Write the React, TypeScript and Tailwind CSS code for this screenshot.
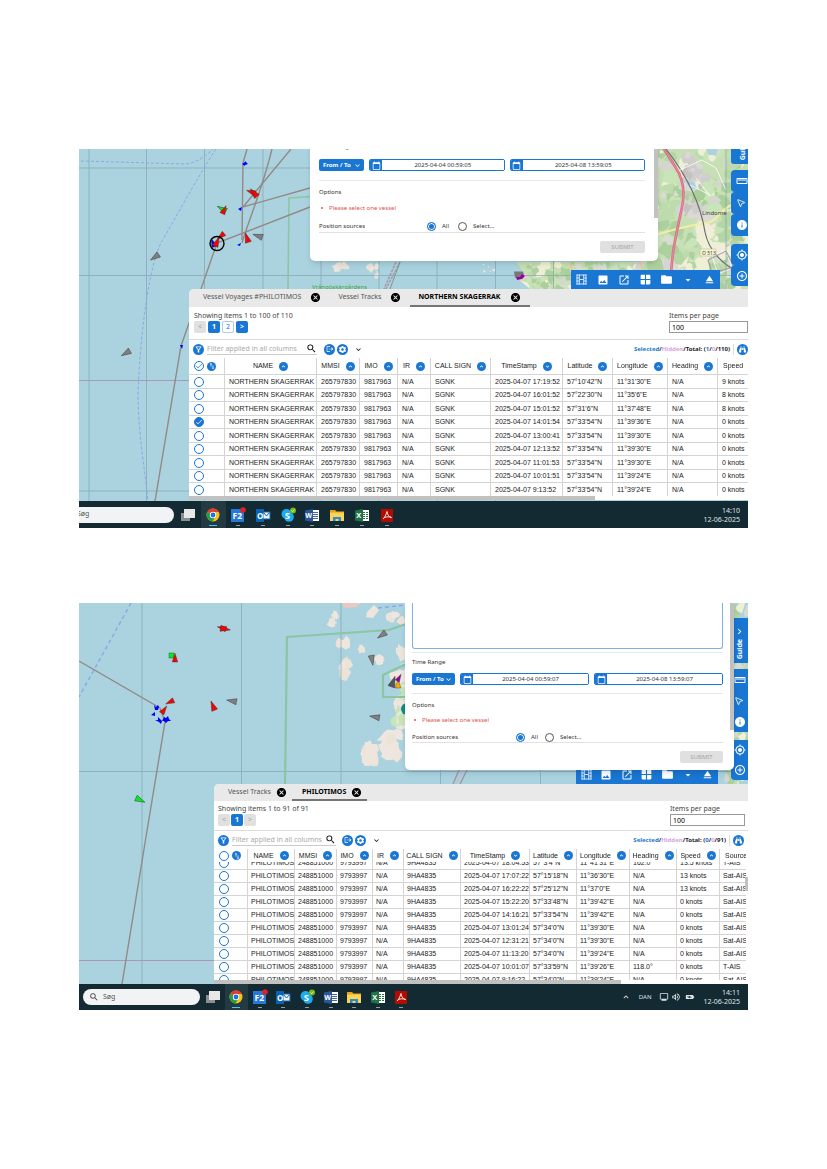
import { useLayoutEffect, useRef } from "react";
import { clsx } from "clsx";
import {
  MdAddCircleOutline,
  MdArrowDropDown,
  MdBatteryChargingFull,
  MdCalendarToday,
  MdCancel,
  MdCheck,
  MdChevronRight,
  MdEject,
  MdExpandLess,
  MdExpandMore,
  MdFolder,
  MdInfo,
  MdLogout,
  MdMyLocation,
  MdOpenInNew,
  MdOutlineFilterAlt,
  MdOutlineMonitor,
  MdOutlineVolumeUp,
  MdPhoto,
  MdSearch,
  MdSettings,
  MdStraighten,
  MdSwapVert,
  MdWindow,
} from "react-icons/md";
import { FaBinoculars } from "react-icons/fa";
import { LuMousePointer2 } from "react-icons/lu";

type Column = { label: string; width: string; down?: boolean; noSort?: boolean };

const voyageColumns: Column[] = [
  { label: "NAME", width: "w-[92px]" },
  { label: "MMSI", width: "w-[43px]" },
  { label: "IMO", width: "w-[38px]" },
  { label: "IR", width: "w-[33px]" },
  { label: "CALL SIGN", width: "w-[60px]" },
  { label: "TimeStamp", width: "w-[72px]", down: true },
  { label: "Latitude", width: "w-[50px]" },
  { label: "Longitude", width: "w-[55px]" },
  { label: "Heading", width: "w-[50px]" },
  { label: "Speed", width: "w-auto", noSort: true },
];

const voyageRows = [
  ["17:19:52", "57°10'42\"N", "11°31'30\"E", "9 knots"],
  ["16:01:52", "57°22'30\"N", "11°35'6\"E", "8 knots"],
  ["15:01:52", "57°31'6\"N", "11°37'48\"E", "8 knots"],
  ["14:01:54", "57°33'54\"N", "11°39'36\"E", "0 knots"],
  ["13:00:41", "57°33'54\"N", "11°39'30\"E", "0 knots"],
  ["12:13:52", "57°33'54\"N", "11°39'30\"E", "0 knots"],
  ["11:01:53", "57°33'54\"N", "11°39'30\"E", "0 knots"],
  ["10:01:51", "57°33'54\"N", "11°39'24\"E", "0 knots"],
  ["9:13:52", "57°33'54\"N", "11°39'24\"E", "0 knots"],
].map(([time, lat, lon, speed]) => [
  "NORTHERN SKAGERRAK", "265797830", "9817963", "N/A", "SGNK", `2025-04-07 ${time}`, lat, lon, "N/A", speed,
]);

const trackColumns: Column[] = [
  { label: "NAME", width: "w-[47px]" },
  { label: "MMSI", width: "w-[42px]" },
  { label: "IMO", width: "w-[36px]" },
  { label: "IR", width: "w-[31px]" },
  { label: "CALL SIGN", width: "w-[57px]" },
  { label: "TimeStamp", width: "w-[69px]", down: true },
  { label: "Latitude", width: "w-[47px]" },
  { label: "Longitude", width: "w-[53px]" },
  { label: "Heading", width: "w-[47px]" },
  { label: "Speed", width: "w-[43px]" },
  { label: "Source", width: "w-auto", noSort: true },
];

const trackRows = [
  ["18:04:53", "57°3'4\"N", "11°41'31\"E", "162.0°", "13.5 knots", "T-AIS"],
  ["17:07:22", "57°15'18\"N", "11°36'30\"E", "N/A", "13 knots", "Sat-AIS"],
  ["16:22:22", "57°25'12\"N", "11°37'0\"E", "N/A", "13 knots", "Sat-AIS"],
  ["15:22:20", "57°33'48\"N", "11°39'42\"E", "N/A", "0 knots", "Sat-AIS"],
  ["14:16:21", "57°33'54\"N", "11°39'42\"E", "N/A", "0 knots", "Sat-AIS"],
  ["13:01:24", "57°34'0\"N", "11°39'30\"E", "N/A", "0 knots", "Sat-AIS"],
  ["12:31:21", "57°34'0\"N", "11°39'30\"E", "N/A", "0 knots", "Sat-AIS"],
  ["11:13:20", "57°34'0\"N", "11°39'24\"E", "N/A", "0 knots", "Sat-AIS"],
  ["10:01:07", "57°33'59\"N", "11°39'26\"E", "118.0°", "0 knots", "T-AIS"],
  ["9:16:22", "57°34'0\"N", "11°39'24\"E", "N/A", "0 knots", "Sat-AIS"],
].map(([time, ...rest]) => [
  "PHILOTIMOS", "248851000", "9793997", "N/A", "9HA4835", `2025-04-07 ${time}`, ...rest,
]);

/* ---------- map ---------- */

function Vessel({ x, y, a, color, s = 1 }: { x: number; y: number; a: number; color: string; s?: number }) {
  return (
    <path
      d="M0 -6 L3.4 5 L-3.4 5 Z"
      fill={color}
      stroke="#333"
      strokeWidth="0.5"
      transform={`translate(${x} ${y}) rotate(${a}) scale(${s})`}
    />
  );
}

// irregular patches spread over a box, always the same for the same seed
function Patches({ x, y, w, h, n, r, seed, colors }: {
  x: number; y: number; w: number; h: number; n: number; r: number; seed: number; colors: string[];
}) {
  let state = seed * 7919;
  const rnd = () => {
    state = (state * 16807) % 2147483647;
    return state / 2147483647;
  };
  return (
    <g>
      {Array.from({ length: n }, (_, i) => {
        const cx = x + rnd() * w;
        const cy = y + rnd() * h;
        const size = r * (0.3 + rnd());
        const points = Array.from({ length: 9 }, (_, k) => {
          const t = (k / 9) * Math.PI * 2;
          const d = size * (0.5 + rnd() * 0.7);
          return `${(cx + Math.cos(t) * d).toFixed(1)},${(cy + Math.sin(t) * d).toFixed(1)}`;
        });
        return <polygon key={i} points={points.join(" ")} fill={colors[Math.floor(rnd() * colors.length)]} />;
      })}
    </g>
  );
}

const landColors = ["#add19e", "#bcdcae", "#a9cf9a", "#eef0d5", "#d6d5d3", "#c8e4b8", "#dadbd2", "#b4d6a5"];
const rockColors = ["#eee5dc", "#efe6df", "#ebe2d8"];

function SkagerrakMap() {
  return (
    <svg className="absolute inset-0 h-full w-full" viewBox="79 149 669 352" preserveAspectRatio="xMinYMin slice" aria-hidden="true">
      <defs>
        <clipPath id="eastLand">
          <path d="M516 262 L522 270 L517 278 L530 289 L748 289 L748 149 L640 149 L640 262 Z" />
        </clipPath>
      </defs>
      <rect x="79" y="149" width="669" height="352" fill="#aad3df" />
      <Patches x={334} y={262} w={16} h={6} n={7} r={4} seed={12} colors={rockColors} />
      <Patches x={370} y={266} w={9} h={10} n={8} r={4} seed={77} colors={rockColors} />
      <Patches x={478} y={262} w={18} h={10} n={5} r={2} seed={5} colors={rockColors} />
      <g clipPath="url(#eastLand)">
        <rect x="510" y="149" width="240" height="141" fill="#c7dfb4" />
        <Patches x={516} y={260} w={220} h={30} n={260} r={5} seed={31} colors={landColors} />
        <Patches x={655} y={149} w={95} h={120} n={170} r={7} seed={91} colors={landColors} />
        <Patches x={684} y={154} w={22} h={60} n={26} r={7} seed={8} colors={["#d0cdcd", "#dcd8d8", "#c5c1c1"]} />
        <Patches x={702} y={222} w={20} h={34} n={14} r={8} seed={44} colors={["#eef0d5", "#f0edd8"]} />
        <path d="M706 149 h12 l-2 6 h-7z M684 180 l10 2 4 8 -8 -2z" fill="#aad3df" />
        <g fill="none">
          <path d="M658 234 C680 228 690 225 703 224 S718 212 731 205" stroke="#f3efa2" strokeWidth="2" />
          <path d="M664 149 L676 168 C684 180 685 196 681 212 C676 236 670 258 671 289" stroke="#dc6a85" strokeWidth="2.6" />
          <path d="M664 149 L676 168 C684 180 685 196 681 212 C676 236 670 258 671 289" stroke="#e88ba2" strokeWidth="1" />
          <path d="M666 149 C684 172 700 200 705 232 C709 252 722 262 731 268" stroke="#6d6d6d" strokeWidth="1.2" />
          <path d="M680 170 l22 -10 14 8 10 22 M690 185 l20 10 M696 178 l14 18 M712 256 l14 -6 6 18 -14 6z" stroke="#fff" strokeWidth="0.8" />
          <path d="M708 260 l18 -9 8 16 -22 6z" stroke="#a98fae" strokeWidth="1" />
        </g>
        <path d="M571 262 l1 26 M640 262 l8 26" stroke="#f7c48a" strokeWidth="1.2" />
      </g>
      <path d="M400 262 L386 289 M396 262 L384 289" stroke="#a79ab5" strokeWidth="1.6" fill="none" strokeDasharray="3 1" />
      <path d="M400 262 L390 289" stroke="#7c9a86" strokeWidth="1" fill="none" />

      <g stroke="#7d9ca7" strokeWidth="1" opacity="0.6">
        <path d="M89 149V501M146.5 149V501M204.5 149V501M263 149V501M321 149V501M379 149V501M437 149V501M495.5 149V501M553.5 149V501M726 149V501" />
        <path d="M79 168H310M79 275.5H731M79 491H200" />
      </g>
      <path d="M79 380.5 H190" stroke="#a897b5" strokeWidth="1.2" />
      <g fill="none" stroke="#8da5ea" strokeWidth="1" strokeDasharray="3 2">
        <path d="M81 161 L150 163 L186 164 C196 163 206 156 213 149" />
        <path d="M216 149 C196 180 180 210 162 241 C150 262 140 330 138 396 C139 440 145 470 148 501" />
      </g>
      <path d="M312 196.5 L289 198 L288 289" fill="none" stroke="#8cc5a4" strokeWidth="1.6" />
      <g fill="none" stroke="#938986" strokeWidth="1.4">
        <path d="M247 149 L243 163 L242 240" />
        <path d="M272 149 C262 190 248 222 242 243" />
        <path d="M291 149 L243 207 L310 188" />
        <path d="M310 207 L217 243 L201 289 L181 346 L155 501" />
      </g>
      <text x="312" y="289" fontSize="6" fill="#39a53f" fontFamily="Noto Sans, sans-serif">Vrångöskärgårdens</text>
      <text x="702" y="215" fontSize="6" fill="#444" fontFamily="Noto Sans, sans-serif">Lindome</text>
      <rect x="700" y="249" width="16" height="7" rx="1" fill="#f4f3d2" stroke="#b9b58a" strokeWidth="0.5" />
      <text x="702" y="254.5" fontSize="5" fill="#444" fontFamily="Noto Sans, sans-serif">O 513</text>

      <Vessel x={251} y={192} a={-70} color="#f00" s={0.8} />
      <Vessel x={254} y={193} a={-40} color="#f00" s={0.9} />
      <Vessel x={222} y={209} a={-60} color="#0e2" s={0.9} />
      <Vessel x={224} y={210} a={25} color="#f00" s={0.8} />
      <Vessel x={213} y={243} a={-20} color="#00f" s={0.8} />
      <Vessel x={221} y={236} a={-130} color="#f00" s={0.8} />
      <Vessel x={217} y={242} a={25} color="#f00" s={0.9} />
      <Vessel x={247} y={238} a={-18} color="#f00" s={0.9} />
      <Vessel x={258} y={236} a={-72} color="#808080" s={0.9} />
      <Vessel x={155} y={257} a={-125} color="#808080" s={0.9} />
      <Vessel x={126} y={353} a={-120} color="#808080" s={0.9} />
      <path d="M514 271.5 l9 0 1 4 -3 3 -6 -1z" fill="#777" />
      <path d="M516 277 l4 0 2 -3 3 2 -3 3 -5 1z" fill="#909" />
      <g fill="#00f">
        <path d="M242 164 l3 -2 0 -1 3 3 -3 1 0 1z M238 209 l4 -2 -1 4z M237 245 l4 -2 -1 3z M180 345 l3 0 -1 4z" />
      </g>
      <circle cx="217" cy="243.5" r="7" fill="none" stroke="#000" strokeWidth="1.4" />
    </svg>
  );
}

function PhilotimosMap() {
  return (
    <svg className="absolute inset-0 h-full w-full" viewBox="79 603 669 381" preserveAspectRatio="xMinYMin slice" aria-hidden="true">
      <rect x="79" y="603" width="669" height="381" fill="#aad3df" />
      <path d="M341 603 h20 l-4 4 -12 1z" fill="#ecc8c0" />
      <path d="M367 612 l7 -7 5 5 -6 8 -7 -1z" fill="#eee5dc" />
      <Patches x={330} y={614} w={7} h={9} n={6} r={4} seed={3} colors={rockColors} />
      <Patches x={388} y={614} w={16} h={8} n={9} r={5} seed={19} colors={rockColors} />
      <Patches x={338} y={642} w={10} h={3} n={8} r={5} seed={41} colors={rockColors} />
      <Patches x={342} y={662} w={7} h={12} n={12} r={7} seed={57} colors={rockColors} />
      <Patches x={360} y={647} w={3} h={3} n={3} r={4} seed={9} colors={rockColors} />
      <Patches x={378} y={658} w={4} h={3} n={3} r={5} seed={23} colors={rockColors} />
      <Patches x={366} y={744} w={6} h={18} n={18} r={7} seed={88} colors={rockColors} />
      <Patches x={386} y={732} w={10} h={24} n={18} r={8} seed={63} colors={rockColors} />
      <Patches x={397} y={645} w={9} h={85} n={30} r={7} seed={101} colors={["#eee5dc", "#efe6df", "#c8e4b8", "#e9e4dc"]} />
      <Patches x={725} y={603} w={25} h={180} n={110} r={7} seed={71} colors={landColors} />
      <g stroke="#7d9ca7" strokeWidth="1" opacity="0.6">
        <path d="M142 603V984M241.5 603V984M341 603V784M440.5 603V784M540.5 603V784M79 771.5H734" />
      </g>
      <path d="M79 960.5 H214" stroke="#a897b5" strokeWidth="1.2" />
      <path d="M131 603 L79 697 M378 608 L405 605" fill="none" stroke="#8da5ea" strokeWidth="1.4" strokeDasharray="4 3" />
      <g fill="none" stroke="#8cc5a4" strokeWidth="2.2">
        <path d="M406 624 L389 630 L287 637 L285 784" />
        <path d="M406 664 L383 675 V697 H406" />
      </g>
      <path d="M467 770 L460 784 M459 770 L453 784" stroke="#9a9fa0" strokeWidth="1.6" fill="none" />
      <path d="M463 770 L456 784" stroke="#d7a9dd" strokeWidth="1.4" fill="none" strokeDasharray="2 1" />
      <path d="M79 661 L160 708 L165 722 L145 843 L122 984" fill="none" stroke="#938986" strokeWidth="1.4" />
      <circle cx="407" cy="709" r="6" fill="#108a8a" />

      <Vessel x={222} y={628} a={-75} color="#f00" s={0.8} />
      <Vessel x={225} y={629} a={100} color="#f00" s={0.9} />
      <rect x="169" y="653" width="5" height="5" fill="#0e2" stroke="#333" strokeWidth="0.4" />
      <Vessel x={175} y={658} a={0} color="#f00" s={0.8} />
      <Vessel x={170} y={702} a={-115} color="#f00" s={0.8} />
      <Vessel x={164} y={710} a={35} color="#f00" s={0.8} />
      <Vessel x={213} y={706} a={-22} color="#f00" s={0.9} />
      <Vessel x={232} y={701} a={-80} color="#808080" s={0.9} />
      <Vessel x={140} y={800} a={115} color="#0e2" s={0.9} />
      <Vessel x={382} y={635} a={-125} color="#808080" s={0.9} />
      <Vessel x={372} y={660} a={170} color="#808080" s={0.9} />
      <Vessel x={375} y={717} a={-80} color="#808080" s={0.9} />
      <Vessel x={393} y={682} a={20} color="#555" />
      <Vessel x={398} y={684} a={0} color="#fa0" s={0.8} />
      <Vessel x={399} y={678} a={30} color="#909" s={0.7} />
      <g fill="#00f">
        <path d="M154 705 l2 2 2 -2 1 2 -1 3 -3 0z M151 715 l4 -3 0 4z M155 720 l3 0 0 -3 4 4 -1 3 -2 -2z M164 717 l2 1 2 -2 1 3 2 2 -3 0 -2 2 -2 -2 -2 0z" />
      </g>
    </svg>
  );
}

/* ---------- search dialog ---------- */

function DateField({ label, value }: { label: string; value: string }) {
  return (
    <label className="flex h-3 min-w-0 flex-1 overflow-hidden rounded-[2px] border border-[#1976d2]">
      <span className="flex w-3 shrink-0 items-center justify-center bg-[#1976d2] text-white">
        <MdCalendarToday size={9} />
      </span>
      <input aria-label={label} defaultValue={value} className="w-full min-w-0 bg-white text-center text-[6px] leading-[10px] text-[#333] outline-none" />
    </label>
  );
}

function SearchDialog({ id, from, to, roomy, className }: {
  id: string; from: string; to: string; roomy?: boolean; className: string;
}) {
  const radio = "size-[9px] appearance-none rounded-full border border-[#555] checked:border-[#1976d2] checked:bg-[#1976d2] checked:shadow-[inset_0_0_0_1px_white]";
  return (
    <form
      onSubmit={(e) => e.preventDefault()}
      className={clsx("absolute rounded-b-[5px] bg-white text-[6px] leading-[10px] text-[#333] shadow-md", className)}
    >
      {!roomy && (
        <>
          <textarea aria-label="Vessels" className="block h-[46px] w-full resize-none rounded-b-[3px] border border-t-0 border-[#7fb1e3] outline-none" />
          <hr className="mt-[3px] mb-1 border-[#e8e8e8]" />
        </>
      )}
      <h2>Time Range</h2>
      <div className={clsx("flex gap-[5px]", roomy ? "mt-[7px]" : "mt-1.5")}>
        <div className="relative text-white">
          <select aria-label="Range type" className={clsx("block h-3 appearance-none rounded-[2px] bg-[#1976d2] pl-1 text-[6px] font-bold outline-none", roomy ? "w-[45px]" : "w-[43px]")}>
            <option>From / To</option>
          </select>
          <MdExpandMore size={9} className="pointer-events-none absolute top-0.5 right-0.5" />
        </div>
        <DateField label="From" value={from} />
        <DateField label="To" value={to} />
      </div>
      <hr className={clsx("border-[#e8e8e8]", roomy ? "mt-[9px]" : "mt-2")} />
      <h2 className="mt-1.5">Options</h2>
      <ul className={clsx("text-[#d9534f]", roomy ? "mt-1.5" : "mt-[5px]")}>
        <li className="flex items-center gap-1.5 pl-0.5">
          <span className="size-0.5 rounded-full bg-[#d9534f]" />
          Please select one vessel
        </li>
      </ul>
      <fieldset className={clsx("flex items-center border-b border-[#e2e2e2]", roomy ? "mt-2 pb-px" : "mt-[7px]")}>
        <legend className={clsx("float-left", roomy ? "w-[108px]" : "w-[104px]")}>Position sources</legend>
        <label className="flex items-center gap-1.5">
          <input type="radio" name={`${id}-source`} defaultChecked className={radio} />
          All
        </label>
        <label className={clsx("flex items-center gap-1.5", roomy ? "ml-[9px]" : "ml-[7px]")}>
          <input type="radio" name={`${id}-source`} className={radio} />
          Select...
        </label>
      </fieldset>
      <button type="submit" disabled className={clsx("mt-2 ml-auto block h-3 rounded-[2px] bg-[#e0e0e0] text-[#a6a6a6]", roomy ? "w-[45px]" : "w-[43px]")}>
        SUBMIT
      </button>
      <div className={clsx("absolute top-0 right-0 w-1 bg-[#c1c1c1]", roomy ? "h-[76px]" : "h-[127px]")} />
    </form>
  );
}

/* ---------- toolbars ---------- */

function FilmIcon() {
  return (
    <svg width="11" height="11" viewBox="0 0 11 11" fill="none" stroke="currentColor" strokeWidth="0.8" aria-hidden="true">
      <path d="M0.5 1H10.5M0.5 10H10.5M0.5 4H3M0.5 7H3M8 4H10.5M8 7H10.5M3.5 5.5H7.5M1 0.5V10.5M3.3 0.5V10.5M7.7 0.5V10.5M10 0.5V10.5" />
    </svg>
  );
}

function MapToolbar({ className }: { className: string }) {
  const tools = [
    ["Timeline", <FilmIcon />],
    ["Snapshot", <MdPhoto size={12} />],
    ["Open window", <MdOpenInNew size={12} />],
    ["Layout", <MdWindow size={13} />],
    ["Folder", <MdFolder size={13} />],
    ["More", <MdArrowDropDown size={12} />],
    ["Eject", <MdEject size={13} />],
  ] as const;
  return (
    <div className={clsx("absolute flex items-center bg-[#1976d2] text-white", className)}>
      {tools.map(([name, icon]) => (
        <button key={name} aria-label={name} className="flex flex-1 items-center justify-center">
          {icon}
        </button>
      ))}
    </div>
  );
}

function SideTool({ name, height, children }: { name: string; height: string; children: React.ReactNode }) {
  return (
    <button aria-label={name} className={clsx("flex w-full items-center rounded-l-[4px] bg-[#1976d2]", height)}>
      {children}
    </button>
  );
}

function SideTools({ narrow, className }: { narrow?: boolean; className: string }) {
  const upper = narrow ? "h-[21px] pl-[3px]" : "h-[22px] pl-[5px]";
  const lower = narrow ? "h-[20px] pl-[3px]" : "h-[21px] pl-[5px]";
  return (
    <div className={clsx("absolute right-0 flex w-[17px] flex-col text-white", className)}>
      <button className={clsx("flex h-[45px] flex-col items-center justify-end rounded-l-[3px] bg-[#1976d2] pb-1", narrow ? "pl-0" : "pl-1.5")}>
        <MdChevronRight size={11} />
        <span className="mt-0.5 rotate-180 text-[7px] leading-[8px] font-bold [writing-mode:vertical-rl]">Guide</span>
      </button>
      <div className="mt-1.5">
        <SideTool name="Measure" height={upper}><MdStraighten size={12} /></SideTool>
        <SideTool name="Pointer" height={upper}><LuMousePointer2 size={10} /></SideTool>
        <SideTool name="Information" height={upper}><MdInfo size={12} /></SideTool>
      </div>
      <div className="mt-2">
        <SideTool name="Locate" height={lower}><MdMyLocation size={12} /></SideTool>
        <SideTool name="Zoom in" height={lower}><MdAddCircleOutline size={12} /></SideTool>
      </div>
    </div>
  );
}

/* ---------- results panel ---------- */

function Tab({ label, active, dense }: { label: string; active?: boolean; dense?: boolean }) {
  return (
    <div
      className={clsx(
        "flex items-center border-b-2 pt-px",
        dense ? "gap-[5px] pr-[5px] pl-2.5" : "gap-[9px] pr-[9px] pl-2",
        active ? "border-[#757575] font-bold text-black" : "border-transparent text-[#555]",
      )}
    >
      <button>{label}</button>
      <button aria-label={`Close ${label}`} className="text-black"><MdCancel size={11} /></button>
    </div>
  );
}

function PageButton({ children, kind }: { children: React.ReactNode; kind: "off" | "on" | "plain" }) {
  return (
    <button
      disabled={kind === "off"}
      className={clsx(
        "size-3 rounded-[2px] text-center text-[7px] leading-[10px]",
        kind === "off" && "bg-[#e0e0e0] text-[#aaa]",
        kind === "on" && "bg-[#1976d2] font-bold text-white",
        kind === "plain" && "border border-[#a9cbee] bg-white text-[#1976d2]",
      )}
    >
      {children}
    </button>
  );
}

function Round({ name, children, small }: { name: string; children: React.ReactNode; small?: boolean }) {
  return (
    <button aria-label={name} className={clsx("flex shrink-0 items-center justify-center rounded-full bg-[#1976d2] text-white", small ? "size-[9px]" : "size-[11px]")}>
      {children}
    </button>
  );
}

function Tick({ label, checked, outlined }: { label: string; checked?: boolean; outlined?: boolean }) {
  return (
    <span className="inline-grid size-[10px] place-items-center align-middle">
      <input
        type="checkbox"
        aria-label={label}
        defaultChecked={checked}
        className={clsx("col-start-1 row-start-1 size-[10px] appearance-none rounded-full border border-[#1976d2]", outlined ? "bg-white" : "checked:bg-[#1976d2]")}
      />
      {checked && (
        <MdCheck size={8} className={clsx("pointer-events-none z-10 col-start-1 row-start-1", outlined ? "text-[#1976d2]" : "text-white")} />
      )}
    </span>
  );
}

function ResultsTable({ columns, rows, checkedRow, allTicked, dense, scrolled, className }: {
  columns: Column[]; rows: string[][]; checkedRow?: number; allTicked?: boolean; dense?: boolean; scrolled: number; className: string;
}) {
  const box = useRef<HTMLDivElement>(null);

  useLayoutEffect(() => {
    if (box.current) box.current.scrollTop = scrolled;
  }, [scrolled]);

  return (
    <div ref={box} className={clsx("overflow-hidden", className)}>
      <table className="w-full table-fixed border-separate border-spacing-0 font-['Liberation_Sans',Arial,sans-serif] text-[7px] leading-[8px] text-[#222]">
        <colgroup>
          <col className={dense ? "w-[34px]" : "w-[36px]"} />
          {columns.map((c) => <col key={c.label} className={c.width} />)}
        </colgroup>
        <thead className="sticky top-0 z-20 bg-white">
          <tr className={dense ? "h-[13px]" : "h-[17px]"}>
            <th className={clsx("border-r border-[#d4d4d4] p-0 pl-[5px] text-left", !dense && "border-b")}>
              <span className="flex items-center gap-[3px]">
                <Tick label="Select all" checked={allTicked} outlined />
                <Round name="Swap sorting" small><MdSwapVert size={8} /></Round>
              </span>
            </th>
            {columns.map((c) => (
              <th key={c.label} className={clsx("border-[#d4d4d4] p-0 font-normal", !dense && "border-b", c.noSort ? "pl-[5px] text-left" : "border-r")}>
                <span className={clsx("flex items-center gap-1.5", !c.noSort && "justify-center")}>
                  {c.label}
                  {!c.noSort && (
                    <Round name={`Sort by ${c.label}`} small>
                      {c.down ? <MdExpandMore size={7} /> : <MdExpandLess size={7} />}
                    </Round>
                  )}
                </span>
              </th>
            ))}
          </tr>
        </thead>
        <tbody>
          {rows.map((row, i) => (
            <tr key={row[5]} className={dense ? "h-[13px]" : "odd:h-[14px] even:h-[13px]"}>
              <td className="border-r border-b border-[#d4d4d4] p-0 pl-[5px]">
                <span className="flex items-center"><Tick label={`Select ${row[5]}`} checked={i === checkedRow} /></span>
              </td>
              {row.map((cell, k) => (
                <td key={k} className={clsx("border-b border-[#d4d4d4] p-0 whitespace-nowrap", dense ? "pl-[3px]" : "pl-1", k < row.length - 1 && "border-r")}>
                  {cell}
                </td>
              ))}
            </tr>
          ))}
        </tbody>
      </table>
    </div>
  );
}

function PanelBar({ selected, total, dense }: { selected: string; total: string; dense?: boolean }) {
  return (
    <div className={clsx("flex h-[19px] items-center border-t border-[#dcdcdc] pl-1", dense && "pr-1")}>
      <Round name="Filter"><MdOutlineFilterAlt size={9} /></Round>
      <div className={clsx("ml-[3px] flex items-center border-b border-[#ccc]", dense ? "w-[104px]" : "w-[110px]")}>
        <input
          aria-label="Filter"
          placeholder="Filter applied in all columns"
          className="h-2.5 min-w-0 flex-1 text-[7px] leading-[10px] outline-none placeholder:text-[#aaa]"
        />
        <MdSearch size={11} className="shrink-0 text-black" />
      </div>
      <div className={clsx("flex items-center gap-0.5", dense ? "ml-1.5" : "ml-[7px]")}>
        <Round name="Export"><MdLogout size={8} /></Round>
        <Round name="Settings"><MdSettings size={9} /></Round>
        <button aria-label="More" className="ml-1"><MdExpandMore size={9} className="text-black" /></button>
      </div>
      <div className="ml-auto text-[6px] font-bold text-[#222]">
        <span className="text-[#1976d2]">Selected</span>/<span className="text-[#d9a3e0]">Hidden</span>/Total: (
        <span className="text-[#1976d2]">{selected}</span>/<span className="text-[#d9a3e0]">0</span>/{total})
      </div>
      <div className="ml-[3px] border-l border-[#ddd] pl-[3px]">
        <Round name="Find"><FaBinoculars size={7} /></Round>
      </div>
    </div>
  );
}

function PageSize({ id, className }: { id: string; className: string }) {
  return (
    <div className={clsx("flex flex-col", className)}>
      <label htmlFor={id} className="leading-[10px]">Items per page</label>
      <input id={id} defaultValue="100" className="h-3 w-full border border-[#999] px-0.5 text-[7px] text-black outline-none" />
    </div>
  );
}

/* ---------- taskbar ---------- */

function AppIcon({ kind }: { kind: string }) {
  return (
    <svg width="16" height="16" viewBox="0 0 16 16" aria-hidden="true" fontFamily="Open Sans, sans-serif" fontWeight="bold">
      {kind === "tasks" && <><rect x="1" y="6" width="9" height="8" fill="#8a8f92" /><rect x="4" y="2" width="11" height="9" fill="#e8e8e8" /></>}
      {kind === "chrome" && (
        <>
          <circle cx="8" cy="8" r="6.5" fill="#fbc116" />
          <path d="M8 8 L2.400 4.700 A6.5 6.5 0 0 1 13.700 4.900 L8 4.900Z" fill="#e33b2e" />
          <path d="M8 8 L2.400 4.700 A6.5 6.5 0 0 0 7.5 14.5 L10.600 9.600Z" fill="#2a9d47" />
          <circle cx="8" cy="8" r="3.2" fill="#fff" />
          <circle cx="8" cy="8" r="2.4" fill="#1b73e8" />
        </>
      )}
      {kind === "f2" && <><rect x="1" y="2" width="13" height="13" fill="#2678d9" /><text x="2.5" y="11.5" fontSize="8.5" fill="#fff">F2</text><circle cx="13" cy="3" r="2.8" fill="#d22" /></>}
      {kind === "outlook" && <><rect x="1" y="2" width="8" height="13" fill="#0a64b5" /><rect x="8" y="5" width="7" height="7" fill="#e9f3fb" stroke="#0a64b5" /><path d="M8.5 5.5 L11.5 9 L14.5 5.5" fill="none" stroke="#0a64b5" /><text x="2" y="11.5" fontSize="8" fill="#fff">O</text></>}
      {kind === "skype" && <><circle cx="6.5" cy="7" r="5" fill="#1badec" /><circle cx="9" cy="10" r="4.8" fill="#1badec" /><text x="4.8" y="12" fontSize="9.5" fill="#fff">S</text><circle cx="13" cy="3.5" r="3" fill="#78ba12" /><path d="M11.5 3.5 l1.200 1.200 1.800 -2.200" stroke="#fff" fill="none" strokeWidth="0.7" /></>}
      {kind === "word" && <><rect x="7" y="3" width="8" height="11" fill="#fff" /><path d="M9 5.5h5M9 7.5h5M9 9.5h5M9 11.5h5" stroke="#2b579a" strokeWidth="0.9" /><path d="M1 3.5 L9 2 V15 L1 13.5Z" fill="#2b579a" /><text x="1.3" y="11" fontSize="7" fill="#fff">W</text></>}
      {kind === "folder" && <><path d="M1 3h5l1.500 1.500H15V14H1Z" fill="#e8a317" /><rect x="1" y="5.5" width="14" height="8.5" fill="#fcd354" /><path d="M4 14v-4h8v4h-2.500v-2h-3v2z" fill="#2a8ad4" /></>}
      {kind === "excel" && <><rect x="7" y="3" width="8" height="11" fill="#fff" /><path d="M9 5.5h2M12 5.5h2M9 7.5h2M12 7.5h2M9 9.5h2M12 9.5h2M9 11.5h2M12 11.5h2" stroke="#217346" strokeWidth="1.1" /><path d="M1 3.5 L9 2 V15 L1 13.5Z" fill="#217346" /><text x="2.3" y="11" fontSize="7.5" fill="#fff">X</text></>}
      {kind === "pdf" && <><rect x="2" y="2" width="12" height="13" rx="1" fill="#b30b00" /><path d="M8 4.5 C7 8 6 10 4 12 M8 4.5 C8.5 8 10 10 12.5 10.5 M5 10.8 C7.5 9.5 10 9.5 12.5 10.5" stroke="#fff" fill="none" strokeWidth="0.9" /></>}
    </svg>
  );
}

const apps = ["tasks", "chrome", "f2", "outlook", "skype", "word", "folder", "excel", "pdf"];

function Taskbar({ time, pill, dock, className, children }: {
  time: string; pill: string; dock: string; className: string; children?: React.ReactNode;
}) {
  return (
    <footer className={clsx("flex items-center bg-[#142a32] text-[#dfe5e8]", className)}>
      <label className={clsx("flex h-4 w-[117px] shrink-0 items-center gap-1 rounded-full bg-[#f1f3f4] pl-1.5 text-[#444]", pill)}>
        <MdSearch size={10} />
        <input aria-label="Søg" placeholder="Søg" className="w-20 text-[7px] outline-none placeholder:text-[#555]" />
      </label>
      <div className={clsx("flex h-full shrink-0", dock)}>
        {apps.map((app) => (
          <button key={app} aria-label={app} className={clsx("flex flex-1 flex-col items-center justify-center pt-[3px]", app === "chrome" && "bg-[#233a42]")}>
            <AppIcon kind={app} />
            <span className={clsx("mt-0.5 h-px", app === "chrome" ? "w-2 bg-[#4cc2ff]" : app === "tasks" ? "w-0" : "w-1 bg-[#93a0a5]")} />
          </button>
        ))}
      </div>
      <div className="ml-auto flex items-center pr-2">
        {children}
        <div className="text-right text-[7px] leading-[9px]">
          <div>{time}</div>
          <div>12-06-2025</div>
        </div>
      </div>
    </footer>
  );
}

export default function App() {
  return (
    <main className="flex min-h-screen flex-col gap-[75px] bg-white px-[79px] pt-[149px] pb-[159px] font-['Noto_Sans','Open_Sans',sans-serif]">
      <section>
        <div className="relative overflow-hidden pt-[140px] pb-px pl-[110px]">
          <SkagerrakMap />
          <MapToolbar className="top-[121px] right-[28px] h-[19px] w-[149px]" />
          <SideTools className="-top-[30px]" />
          <SearchDialog
            id="voyage"
            roomy
            from="2025-04-04 00:59:05"
            to="2025-04-08 13:59:05"
            className="-top-[7px] right-[90px] left-[231px] pr-[13px] pb-2 pl-[9px]"
          />
          <div className="relative overflow-hidden rounded-tl-[5px] bg-white text-[7px] text-[#444]">
            <div className="flex h-[18px] bg-[#e9e9e9] pl-1.5">
              <Tab label="Vessel Voyages #PHILOTIMOS" />
              <Tab label="Vessel Tracks" />
              <Tab label="NORTHERN SKAGERRAK" active />
            </div>
            <div className="flex h-8 justify-between pt-1 pl-[5px]">
              <div>
                <p className="leading-[10px]">Showing items 1 to 100 of 110</p>
                <div className="flex gap-0.5">
                  <PageButton kind="off">&lt;</PageButton>
                  <PageButton kind="on">1</PageButton>
                  <PageButton kind="plain">2</PageButton>
                  <PageButton kind="on">&gt;</PageButton>
                </div>
              </div>
              <PageSize id="voyage-size" className="w-[79px]" />
            </div>
            <PanelBar selected="1" total="110" />
            <ResultsTable columns={voyageColumns} rows={voyageRows} checkedRow={3} allTicked scrolled={0} className="h-[138px]" />
            <div className="h-1 w-[406px] bg-[#c1c1c1]" />
          </div>
        </div>
        <Taskbar time="14:10" pill="-ml-[22px]" dock="ml-0.5 w-[223px]" className="h-[27px] overflow-hidden" />
      </section>

      <section>
        <div className="relative overflow-hidden pt-[181px] pl-[135px]">
          <PhilotimosMap />
          <MapToolbar className="top-[162px] right-[30px] h-[19px] w-[142px]" />
          <SideTools narrow className="top-[15px]" />
          <SearchDialog
            id="track"
            from="2025-04-04 00:59:07"
            to="2025-04-08 13:59:07"
            className="top-0 right-[14px] left-[326px] pr-[11px] pb-[7px] pl-[7px]"
          />
          <div className="relative overflow-hidden rounded-tl-[5px] bg-white text-[7px] text-[#444]">
            <div className="flex h-[17px] bg-[#e9e9e9] pl-1">
              <Tab label="Vessel Tracks" dense />
              <Tab label="PHILOTIMOS" active dense />
            </div>
            <div className="flex h-[29px] justify-between pt-[3px] pr-[3px] pl-1">
              <div>
                <p className="leading-[10px]">Showing items 1 to 91 of 91</p>
                <div className="flex gap-px">
                  <PageButton kind="off">&lt;</PageButton>
                  <PageButton kind="on">1</PageButton>
                  <PageButton kind="off">&gt;</PageButton>
                </div>
              </div>
              <PageSize id="track-size" className="w-[75px]" />
            </div>
            <PanelBar selected="0" total="91" dense />
            <div className="relative pr-0.5">
              <ResultsTable columns={trackColumns} rows={trackRows} dense scrolled={5} className="h-[131px]" />
              <div className="absolute top-7 right-0 h-3.5 w-[3px] bg-[#c1c1c1]" />
            </div>
            <div className="h-1 w-[407px] bg-[#c1c1c1]" />
          </div>
        </div>
        <Taskbar time="14:11" pill="ml-1" dock="ml-px w-[212px]" className="h-[26px]">
          <MdExpandLess size={10} />
          <span className="ml-2 text-[6px]">DAN</span>
          <MdOutlineMonitor size={10} className="ml-2" />
          <MdOutlineVolumeUp size={10} className="ml-0.5" />
          <MdBatteryChargingFull size={10} className="mr-2 ml-1 rotate-90" />
        </Taskbar>
      </section>
    </main>
  );
}
